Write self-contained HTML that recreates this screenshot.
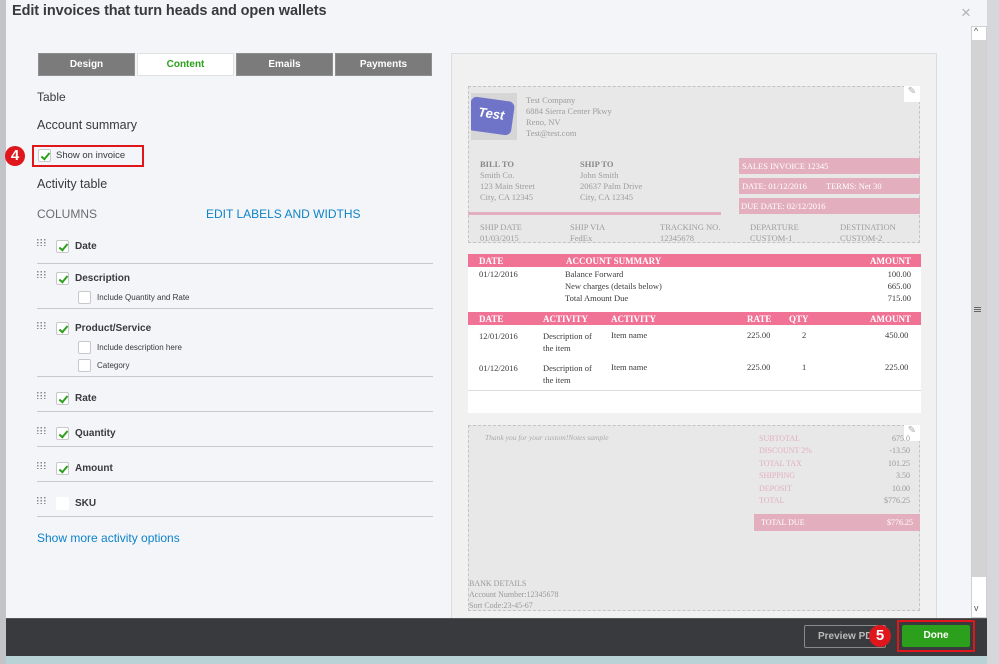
<!DOCTYPE html>
<html><head><meta charset="utf-8"><style>
*{margin:0;padding:0;box-sizing:border-box}
body{width:999px;height:664px;overflow:hidden;background:#f4f5f8;font-family:"Liberation Sans",sans-serif;position:relative;color:#393a3d}
.a{position:absolute}
.s{font-family:"Liberation Serif",serif;white-space:nowrap}
.tab{position:absolute;top:53px;height:23px;width:97px;background:#7b7b7b;color:#fff;font-size:10px;font-weight:bold;text-align:center;line-height:21px;border:1px solid #8e8e8e}
.cb{position:absolute;width:13px;height:13px;background:#fff;border:1px solid #c8c8c8;border-radius:2px}
.cb.c::after{content:"";position:absolute;left:4px;top:1px;width:3px;height:7px;border:solid #2ca01c;border-width:0 2px 2px 0;transform:rotate(40deg)}
.lbl{position:absolute;font-size:10px;font-weight:bold;color:#393a3d}
.sub{position:absolute;font-size:8px;color:#393a3d}
.hr{position:absolute;left:37px;width:396px;height:1px;background:#c8c9cb}
.grip{position:absolute;width:9px;height:7px}
.g{color:#9c9c9c;font-size:9px}
.pk{background:#e3afbf;color:#fff}
.ph{background:#f07396;color:#fff;font-weight:bold;font-size:9px}
</style></head><body>
<svg width="0" height="0" style="position:absolute"><defs><g id="gr" fill="#8a8a8a"><rect x="0" y="0" width="1.5" height="1.5"/><rect x="3.5" y="0" width="1.5" height="1.5"/><rect x="7" y="0" width="1.5" height="1.5"/><rect x="0" y="3" width="1.5" height="1.5"/><rect x="3.5" y="3" width="1.5" height="1.5"/><rect x="7" y="3" width="1.5" height="1.5"/><rect x="0" y="6" width="1.5" height="1.5"/><rect x="3.5" y="6" width="1.5" height="1.5"/><rect x="7" y="6" width="1.5" height="1.5"/></g></defs></svg>
<div class="a" style="left:0;top:0;width:6px;height:664px;background:#c2c4c8"></div>
<div class="a" style="left:987px;top:0;width:12px;height:664px;background:#d5d7da"></div>
<div class="a" style="left:12px;top:3px;font-size:14.5px;font-weight:bold;color:#393a3d;letter-spacing:-0.1px">Edit invoices that turn heads and open wallets</div>
<div class="a" style="left:961px;top:3px;font-size:17px;color:#b0b0b0">×</div>
<div class="a" style="left:971px;top:26px;width:16px;height:592px;background:#fff;border:1px solid #d0d0d0"></div>
<div class="a" style="left:972px;top:40px;width:14px;height:537px;background:#d3d3d3"></div>
<div class="a" style="left:974px;top:26px;font-size:9px;color:#555">^</div>
<div class="a" style="left:974px;top:603px;font-size:9px;color:#555">v</div>
<div class="a" style="left:974px;top:307px;width:7px;height:5px;border-top:1px solid #666;border-bottom:1px solid #666"></div>
<div class="a" style="left:974px;top:309px;width:7px;height:1px;background:#666"></div>
<div class="tab" style="left:38px">Design</div>
<div class="tab" style="left:137px;background:#fff;color:#2ca01c;border-color:#e0e0e0">Content</div>
<div class="tab" style="left:236px">Emails</div>
<div class="tab" style="left:335px">Payments</div>
<div class="a" style="left:37px;top:90px;font-size:12px">Table</div>
<div class="a" style="left:37px;top:118px;font-size:12.5px">Account summary</div>
<div class="a" style="left:32px;top:145px;width:112px;height:22px;border:2px solid #e0161d"></div>
<div class="cb c" style="left:38px;top:149px"></div>
<div class="lbl" style="left:56px;top:150px;font-weight:normal;font-size:9.5px">Show on invoice</div>
<div class="a" style="left:5px;top:146px;width:20px;height:20px;border-radius:50%;background:#e0161d;color:#fff;font-weight:bold;font-size:15px;text-align:center;line-height:20px">4</div>
<div class="a" style="left:37px;top:177px;font-size:12.5px">Activity table</div>
<div class="a" style="left:37px;top:207px;font-size:12px;color:#6b6c72">COLUMNS</div>
<div class="a" style="left:206px;top:207px;font-size:12px;color:#0d83c9">EDIT LABELS AND WIDTHS</div>

<svg class="grip" style="left:37px;top:239px"><use href="#gr"/></svg><div class="cb c" style="left:56px;top:240px"></div><div class="lbl" style="left:75px;top:241px">Date</div>
<div class="hr" style="top:263px"></div>
<svg class="grip" style="left:37px;top:271px"><use href="#gr"/></svg><div class="cb c" style="left:56px;top:272px"></div><div class="lbl" style="left:75px;top:273px">Description</div>
<div class="cb" style="left:78px;top:291px"></div><div class="sub" style="left:97px;top:293px">Include Quantity and Rate</div>
<div class="hr" style="top:308px"></div>
<svg class="grip" style="left:37px;top:322px"><use href="#gr"/></svg><div class="cb c" style="left:56px;top:322px"></div><div class="lbl" style="left:75px;top:323px">Product/Service</div>
<div class="cb" style="left:78px;top:341px"></div><div class="sub" style="left:97px;top:343px">Include description here</div>
<div class="cb" style="left:78px;top:359px"></div><div class="sub" style="left:97px;top:361px">Category</div>
<div class="hr" style="top:376px"></div>
<svg class="grip" style="left:37px;top:392px"><use href="#gr"/></svg><div class="cb c" style="left:56px;top:392px"></div><div class="lbl" style="left:75px;top:393px">Rate</div>
<div class="hr" style="top:411px"></div>
<svg class="grip" style="left:37px;top:427px"><use href="#gr"/></svg><div class="cb c" style="left:56px;top:427px"></div><div class="lbl" style="left:75px;top:428px">Quantity</div>
<div class="hr" style="top:446px"></div>
<svg class="grip" style="left:37px;top:462px"><use href="#gr"/></svg><div class="cb c" style="left:56px;top:462px"></div><div class="lbl" style="left:75px;top:463px">Amount</div>
<div class="hr" style="top:481px"></div>
<svg class="grip" style="left:37px;top:497px"><use href="#gr"/></svg><div class="cb" style="left:56px;top:497px;border-color:#fff"></div><div class="lbl" style="left:75px;top:498px">SKU</div>
<div class="hr" style="top:516px"></div>
<div class="a" style="left:37px;top:531px;font-size:12px;color:#0d83c9">Show more activity options</div>

<div class="a" style="left:451px;top:53px;width:486px;height:566px;background:#f1f1f1;border:1px solid #dcdcdc"></div>
<div class="a" style="left:468px;top:86px;width:452px;height:157px;background:#e8e8e8;border:1px dashed #c4c4c4"></div>
<div class="a" style="left:904px;top:86px;width:16px;height:16px;background:#fff;color:#aaa;font-size:10px;text-align:center">✎</div>
<div class="a" style="left:471px;top:93px;width:46px;height:47px;background:#d6d6d6;overflow:hidden"><div class="a" style="left:-2px;top:6px;width:44px;height:34px;background:#6f74c9;border-radius:6px;transform:rotate(8deg);color:#fff;font-weight:bold;font-style:italic;font-size:13px;text-align:center;line-height:30px">Test</div></div>
<div class="a s g" style="left:526px;top:95px;line-height:11px;font-size:8.5px">Test Company<br>6884 Sierra Center Pkwy<br>Reno, NV<br>Test@test.com</div>
<div class="a s g" style="left:480px;top:159px;line-height:11px;font-size:8.5px"><b style="color:#888">BILL TO</b><br>Smith Co.<br>123 Main Street<br>City, CA 12345</div>
<div class="a s g" style="left:580px;top:159px;line-height:11px;font-size:8.5px"><b style="color:#888">SHIP TO</b><br>John Smith<br>20637 Palm Drive<br>City, CA 12345</div>
<div class="a" style="left:468px;top:212px;width:253px;height:3px;background:#e3afbf"></div>
<div class="a s pk" style="left:739px;top:158px;width:181px;height:16px;font-size:8.5px;padding:3px 3px">SALES INVOICE 12345</div>
<div class="a s pk" style="left:739px;top:178px;width:181px;height:16px;font-size:8.5px;padding:3px 3px">DATE: 01/12/2016 &nbsp; &nbsp; &nbsp; &nbsp; TERMS: Net 30</div>
<div class="a s pk" style="left:739px;top:198px;width:181px;height:16px;font-size:8.5px;padding:3px 2px">DUE DATE: 02/12/2016</div>
<div class="a s g" style="left:480px;top:222px;line-height:11px;font-size:8.5px">SHIP DATE<br>01/03/2015</div>
<div class="a s g" style="left:570px;top:222px;line-height:11px;font-size:8.5px">SHIP VIA<br>FedEx</div>
<div class="a s g" style="left:660px;top:222px;line-height:11px;font-size:8.5px">TRACKING NO.<br>12345678</div>
<div class="a s g" style="left:750px;top:222px;line-height:11px;font-size:8.5px">DEPARTURE<br>CUSTOM-1</div>
<div class="a s g" style="left:840px;top:222px;line-height:11px;font-size:8.5px">DESTINATION<br>CUSTOM-2</div>

<div class="a" style="left:468px;top:254px;width:453px;height:159px;background:#fff"></div>
<div class="a s ph" style="left:468px;top:254px;width:453px;height:13px;line-height:14px"><span class="a" style="left:11px">DATE</span><span class="a" style="left:98px">ACCOUNT SUMMARY</span><span class="a" style="right:10px">AMOUNT</span></div>
<div class="a s" style="left:479px;top:268px;font-size:8.5px;line-height:12px">01/12/2016</div>
<div class="a s" style="left:565px;top:268px;font-size:8.5px;line-height:12px">Balance Forward<br>New charges (details below)<br>Total Amount Due</div>
<div class="a s" style="left:870px;top:268px;width:41px;text-align:right;font-size:8.5px;line-height:12px">100.00<br>665.00<br>715.00</div>
<div class="a s ph" style="left:468px;top:312px;width:453px;height:13px;line-height:14px"><span class="a" style="left:11px">DATE</span><span class="a" style="left:75px">ACTIVITY</span><span class="a" style="left:143px">ACTIVITY</span><span class="a" style="left:279px">RATE</span><span class="a" style="left:321px">QTY</span><span class="a" style="right:10px">AMOUNT</span></div>
<div class="a s" style="left:479px;top:330px;font-size:8.5px;line-height:12px">12/01/2016</div>
<div class="a s" style="left:543px;top:330px;font-size:8.5px;line-height:12px">Description of<br>the item</div>
<div class="a s" style="left:611px;top:330px;font-size:8.5px">Item name</div>
<div class="a s" style="left:747px;top:330px;font-size:8.5px">225.00</div>
<div class="a s" style="left:802px;top:330px;font-size:8.5px">2</div>
<div class="a s" style="left:885px;top:330px;font-size:8.5px">450.00</div>
<div class="a s" style="left:479px;top:362px;font-size:8.5px;line-height:12px">01/12/2016</div>
<div class="a s" style="left:543px;top:362px;font-size:8.5px;line-height:12px">Description of<br>the item</div>
<div class="a s" style="left:611px;top:362px;font-size:8.5px">Item name</div>
<div class="a s" style="left:747px;top:362px;font-size:8.5px">225.00</div>
<div class="a s" style="left:802px;top:362px;font-size:8.5px">1</div>
<div class="a s" style="left:885px;top:362px;font-size:8.5px">225.00</div>
<div class="a" style="left:468px;top:390px;width:453px;height:1px;background:#ddd"></div>

<div class="a" style="left:468px;top:425px;width:452px;height:186px;background:#e8e8e8;border:1px dashed #c4c4c4"></div>
<div class="a" style="left:904px;top:425px;width:16px;height:16px;background:#fff;color:#aaa;font-size:10px;text-align:center">✎</div>
<div class="a s" style="left:485px;top:433px;font-size:7.5px;font-style:italic;color:#aaa">Thank you for your custom!Notes sample</div>
<div class="a s" style="left:759px;top:433px;font-size:8px;line-height:12.4px;color:#e3afbf">SUBTOTAL<br>DISCOUNT 2%<br>TOTAL TAX<br>SHIPPING<br>DEPOSIT<br>TOTAL</div>
<div class="a s" style="left:860px;top:433px;width:50px;text-align:right;font-size:8px;line-height:12.4px;color:#999">675.0<br>-13.50<br>101.25<br>3.50<br>10.00<br>$776.25</div>
<div class="a s pk" style="left:754px;top:514px;width:166px;height:17px;font-size:8px;line-height:17px;padding:0 7px">TOTAL DUE<span style="float:right">$776.25</span></div>
<div class="a s" style="left:469px;top:578px;font-size:8px;line-height:11px;color:#999">BANK DETAILS<br>Account Number:12345678<br>Sort Code:23-45-67</div>

<div class="a" style="left:6px;top:618px;width:981px;height:38px;background:#393a3d;border-top:1px solid #555"></div>
<div class="a" style="left:6px;top:656px;width:981px;height:8px;background:#b9d2d6"></div>
<div class="a" style="left:804px;top:625px;width:82px;height:23px;border:1px solid #8a8a8a;border-radius:2px;color:#bbb;font-size:10px;font-weight:bold;line-height:21px;padding-left:13px;overflow:hidden;white-space:nowrap">Preview PDF</div>
<div class="a" style="left:869px;top:625px;width:22px;height:22px;border-radius:50%;background:#e0161d;color:#fff;font-weight:bold;font-size:15px;text-align:center;line-height:22px">5</div>
<div class="a" style="left:897px;top:620px;width:78px;height:32px;border:2px solid #e0161d"></div>
<div class="a" style="left:902px;top:625px;width:68px;height:22px;background:#2ca01c;border-radius:2px;color:#fff;font-size:10px;font-weight:bold;text-align:center;line-height:22px">Done</div>
</body></html>
